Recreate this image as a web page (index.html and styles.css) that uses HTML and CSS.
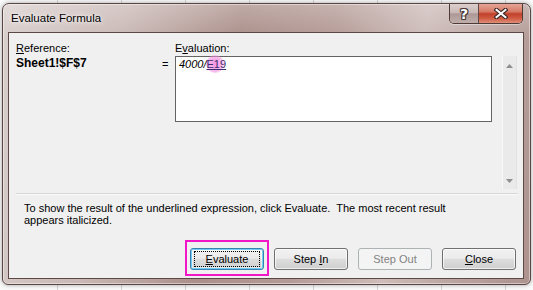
FILE: index.html
```html
<!DOCTYPE html>
<html>
<head>
<meta charset="utf-8">
<link rel="stylesheet" href="styles.css">
</head>
<body>
<div class="window">
  <div class="titlebar">
    <span class="title">Evaluate Formula</span>
    <div class="caption-btns">
      <span class="cap help">?</span>
      <span class="cap close">
        <svg width="14" height="11" viewBox="0 0 14 11">
          <path d="M2.5 1.8 L11.5 9.2 M11.5 1.8 L2.5 9.2" stroke="#3d2b29" stroke-width="4.2" stroke-linecap="square"/>
          <path d="M2.5 1.8 L11.5 9.2 M11.5 1.8 L2.5 9.2" stroke="#ffffff" stroke-width="2" stroke-linecap="square"/>
        </svg>
      </span>
    </div>
  </div>
  <div class="client">
    <div class="top">
      <div class="label lbl-ref"><u>R</u>eference:</div>
      <div class="label lbl-eval">E<u>v</u>aluation:</div>
      <div class="ref">Sheet1!$F$7</div>
      <div class="eq">=</div>
      <div class="evalbox"><span class="blob"></span><i>4000/</i><span class="under">E19</span></div>
      <div class="scroll">
        <svg width="7" height="4" viewBox="0 0 7 4"><path d="M3.5 0 L7 4 H0 Z" fill="#8e8e8e"/></svg>
        <svg width="7" height="4" viewBox="0 0 7 4"><path d="M0 0 H7 L3.5 4 Z" fill="#8e8e8e"/></svg>
      </div>
    </div>
    <div class="sep"></div>
    <p class="note">To show the result of the underlined expression, click Evaluate.&nbsp; The most recent result<br>appears italicized.</p>
    <div class="buttons">
      <button class="btn focused"><span class="focus-rect"><u>E</u>valuate</span></button>
      <button class="btn">Step <u>I</u>n</button>
      <button class="btn disabled">Step Out</button>
      <button class="btn"><u>C</u>lose</button>
    </div>
  </div>
</div>
</body>
</html>
```
FILE: styles.css
```css
html, body {
  margin: 0;
}
body {
  width: 533px;
  height: 290px;
  box-sizing: border-box;
  padding: 3px 0 0 2px;
  overflow: hidden;
  background-color: #fbfbfb;
  background-image: repeating-linear-gradient(90deg, transparent 0 63px, #d6d6d6 63px 64px);
  background-position: -6px 0;
  font-family: "Liberation Sans", Arial, sans-serif;
  font-size: 11px;
  color: #000;
}

.window {
  box-sizing: border-box;
  width: 529px;
  height: 282px;
  border: 1px solid #5a4542;
  border-radius: 7px 7px 6px 6px;
  padding: 0 6px 5px 5px;
  background:
    linear-gradient(180deg, rgba(255,255,255,0.25) 0%, rgba(255,255,255,0) 12%),
    linear-gradient(100deg, #d9cfcd 0%, #c9b8b5 22%, #ab8f8a 42%, #b49a96 58%, #cdbcb9 74%, #b9a29e 88%, #ad928e 100%);
  box-shadow: 0 0 5px rgba(0,0,0,0.35), inset 0 0 0 1px rgba(255,255,255,0.45);
}

.titlebar {
  height: 28px;
  display: flex;
  justify-content: space-between;
  align-items: flex-start;
  padding-left: 3px;
}
.title {
  padding-top: 7px;
  font-size: 11.5px;
  line-height: 15px;
  color: #000;
  text-shadow: 0 0 6px rgba(255,255,255,0.9), 0 0 3px rgba(255,255,255,0.8);
}
.caption-btns {
  display: flex;
  margin-right: 1px;
  border: 1px solid #4e3b38;
  border-top: 0;
  border-radius: 0 0 5px 5px;
  overflow: hidden;
  box-shadow: 0 1px 0 rgba(255,255,255,0.4);
}
.cap {
  height: 19px;
  display: flex;
  align-items: center;
  justify-content: center;
}
.help {
  width: 28px;
  border-right: 1px solid #5e4a47;
  background: linear-gradient(180deg, #dccfcd 0%, #c9b9b6 45%, #ad9895 52%, #bfaeab 100%);
  color: #fff;
  font-weight: bold;
  font-size: 14px;
  font-family: "DejaVu Sans", sans-serif;
  text-shadow: 1px 0 0 #4a3a3a, -1px 0 0 #4a3a3a, 0 1px 0 #4a3a3a, 0 -1px 0 #4a3a3a, 1px 1px 0 #4a3a3a, -1px -1px 0 #4a3a3a, 1px -1px 0 #4a3a3a, -1px 1px 0 #4a3a3a;
}
.close {
  width: 43px;
  background: linear-gradient(180deg, #e4a597 0%, #d77a66 40%, #c2412b 52%, #cf5a41 75%, #e08f7a 100%);
}

.client {
  box-sizing: border-box;
  width: 516px;
  height: 247px;
  border: 1px solid #5c4845;
  background: #f0f0f0;
}

.top {
  display: grid;
  grid-template-columns: 145px 14px 317px 10px 15px;
  grid-template-rows: 15px 133px;
  margin: 8px 6px 0 7px;
  line-height: 15px;
}
.lbl-ref { grid-column: 1; grid-row: 1; }
.lbl-eval { grid-column: 3; grid-row: 1; }
.ref {
  grid-column: 1;
  grid-row: 2;
  font-weight: bold;
  font-size: 12px;
}
.eq {
  grid-column: 2;
  grid-row: 2;
  padding-top: 1px;
  padding-left: 1px;
}
.evalbox {
  grid-column: 3;
  grid-row: 2;
  align-self: start;
  position: relative;
  box-sizing: border-box;
  height: 66px;
  border: 1px solid #646464;
  background: #fff;
  padding: 0 3px;
}
.evalbox i, .evalbox .under {
  position: relative;
}
.under {
  text-decoration: underline;
  color: #3f2a74;
}
.blob {
  position: absolute;
  left: 30px;
  top: -2px;
  width: 18px;
  height: 18px;
  border-radius: 50%;
  background: radial-gradient(circle, rgba(243,120,215,0.8) 0%, rgba(243,140,222,0.6) 55%, rgba(243,150,225,0) 100%);
}
.scroll {
  grid-column: 5;
  grid-row: 2;
  box-sizing: border-box;
  height: 133px;
  border-left: 1px solid #f8f8f8;
  border-right: 1px solid #e2e2e2;
  background: #eaeaea;
  display: flex;
  flex-direction: column;
  justify-content: space-between;
  align-items: center;
  padding: 8px 0 6px;
}

.sep {
  height: 1px;
  margin: 4px 5px 0 7px;
  background: #d7d7d7;
  box-shadow: 0 1px 0 #fafafa;
}
.note {
  margin: 8px 0 0 15px;
  line-height: 12px;
}

.buttons {
  display: flex;
  justify-content: flex-end;
  gap: 10px;
  margin: 22px 7px 0 0;
}
.btn {
  position: relative;
  box-sizing: border-box;
  width: 74px;
  height: 22px;
  padding: 0;
  border: 1px solid #707070;
  border-radius: 3px;
  background: linear-gradient(180deg, #f2f2f2 0%, #ebebeb 46%, #dddddd 52%, #cfcfcf 100%);
  box-shadow: inset 0 0 0 1px rgba(255,255,255,0.65);
  font-family: "Liberation Sans", Arial, sans-serif;
  font-size: 11px;
  color: #000;
  line-height: 15px;
}
.btn.focused {
  border-color: #3c7fb1;
  box-shadow: inset 0 0 0 1px #6fcdf3, inset 0 0 0 2px rgba(255,255,255,0.5);
}
.btn.focused::after {
  content: "";
  position: absolute;
  left: -6px;
  right: -6px;
  top: -9px;
  bottom: -7px;
  border: 2px solid #f316c9;
}
.focus-rect {
  display: block;
  margin: 0 3px;
  border: 1px dotted #000;
  line-height: 14px;
}
.btn.disabled {
  border-color: #adb2b5;
  background: #f4f4f4;
  box-shadow: none;
  color: #838383;
}
```
